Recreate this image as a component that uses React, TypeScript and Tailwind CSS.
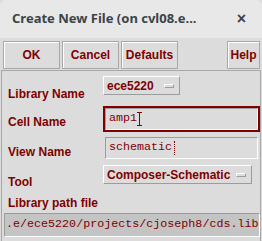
const red = 'text-[#800000]'

function Btn({ label, w }: { label: string; w: string }) {
  return (
    <button
      className={`${w} h-[28px] border border-[#a8a8a8] shadow-[inset_1px_1px_0_#fff] bg-[#dcdcdc] text-[12px] font-bold ${red} flex items-center justify-center`}
    >
      {label}
    </button>
  )
}

function Menu({ value, w }: { value: string; w: string }) {
  return (
    <div
      className={`${w} h-[19px] shrink-0 border border-t-white border-l-white border-b-[#9c9c9c] border-r-[#9c9c9c] bg-[#dcdcdc] flex items-center justify-between pl-[3px] pr-[5px]`}
    >
      <span className={`text-[12px] font-bold ${red} leading-none`}>{value}</span>
      <span className="w-[10px] h-[4px] border border-t-white border-l-white border-b-[#9c9c9c] border-r-[#9c9c9c]" />
    </div>
  )
}

function Caret({ dotted }: { dotted?: boolean }) {
  return (
    <span className="relative inline-block w-[5px] h-[14px] align-middle">
      <span className={`absolute left-[2px] top-0 h-full w-[1px] ${dotted ? 'border-l border-dotted border-[#800000]' : 'bg-[#800000]'}`} />
      <span className={`absolute left-0 top-0 w-[5px] h-[1px] ${dotted ? '' : 'bg-[#800000]'}`} />
      <span className={`absolute left-0 bottom-0 w-[5px] h-[1px] ${dotted ? '' : 'bg-[#800000]'}`} />
    </span>
  )
}

const label = `w-[95px] shrink-0 text-[12px] leading-[14px] font-bold ${red}`
const mono = `font-['Liberation_Mono',monospace] text-[11.7px] ${red} whitespace-nowrap`

export default function App() {
  return (
    <div className="w-[262px] h-[241px] bg-[#dcdcdc] overflow-hidden font-['Liberation_Sans',Arial,sans-serif]">
      <div className="h-[38px] bg-[#e8e8e8] rounded-t-[6px] flex items-center justify-between pl-[12px] pr-[16px]">
        <span className="font-['Noto_Sans',sans-serif] text-[13px] font-bold text-[#3a4448] whitespace-nowrap">
          Create New File (on cvl08.e...
        </span>
        <span className="text-[#3a4448] text-[16px] font-bold leading-none">×</span>
      </div>

      <div className="h-[32px] flex items-start pt-[3px] pl-[3px] pr-[2px] gap-[2px]">
        <Btn label="OK" w="w-[57px]" />
        <Btn label="Cancel" w="w-[57px]" />
        <Btn label="Defaults" w="w-[57px]" />
        <div className="flex-1" />
        <Btn label="Help" w="w-[33px]" />
      </div>

      <div className="mx-[1px] h-[171px] border-t border-x border-[#a8a8a8] pl-[6px] pt-[5px]">
        <div className="flex">
          <div className={`${label} pt-[11px]`}>Library Name</div>
          <Menu value="ece5220" w="w-[77px]" />
        </div>

        <div className="flex mt-[5px]">
          <div className={`${label} pt-[9px]`}>Cell Name</div>
          <div className="w-[158px] h-[26px] border-2 border-[#800000]">
            <div className={`h-full border border-t-[#9c9c9c] border-l-[#9c9c9c] border-b-white border-r-white flex items-center pl-[3px] ${mono}`}>
              amp1<Caret />
            </div>
          </div>
        </div>

        <div className="flex mt-[3px]">
          <div className={`${label} pt-[10px]`}>View Name</div>
          <div className="w-[158px] h-[26px] p-[2px]">
            <div className={`h-full border border-t-[#9c9c9c] border-l-[#9c9c9c] border-b-white border-r-white flex items-center pl-[3px] ${mono}`}>
              schematic<Caret dotted />
            </div>
          </div>
        </div>

        <div className="flex mt-[4px]">
          <div className={`${label} pt-[10px]`}>Tool</div>
          <Menu value="Composer-Schematic" w="w-[149px]" />
        </div>

        <div className={`${label} w-auto mt-[7px]`}>Library path file</div>

        <div className={`-ml-[4px] mt-[3px] w-[256px] h-[24px] bg-[#c4c4c4] border border-t-[#9c9c9c] border-l-[#9c9c9c] border-b-white border-r-white flex items-center pl-[1px] overflow-hidden ${mono}`}>
          .e/ece5220/projects/cjoseph8/cds.lib<Caret dotted />
        </div>
      </div>
    </div>
  )
}
